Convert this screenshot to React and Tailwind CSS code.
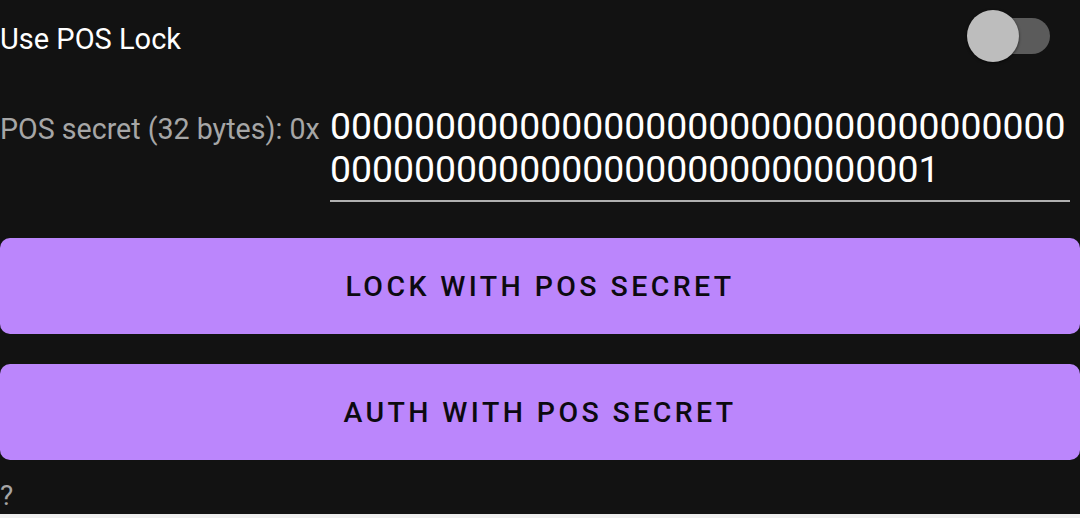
import React from "react";

export default function App() {
  const hex = "0".repeat(63) + "1";
  return (
    <div className="w-[1080px] h-[518px] bg-[#efefef] flex flex-col overflow-hidden" style={{ fontFamily: "Roboto, 'Liberation Sans', sans-serif" }}>
      <div className="h-[514px] shrink-0 bg-[#121212] flex flex-col overflow-hidden">
        <div className="h-[76px] shrink-0 flex items-center justify-between pr-[30px]">
          <span className="text-[29px] text-white leading-none mt-[3px]">Use POS Lock</span>
          <div className="relative w-[83px] h-[52px] mb-[4px]">
            <div className="absolute right-0 top-[8px] h-[36px] w-[76px] rounded-full bg-[#5b5b5b]" />
            <div className="absolute left-0 top-0 w-[52px] h-[52px] rounded-full bg-[#bdbdbd] shadow-[0_1px_3px_rgba(0,0,0,0.6)]" />
          </div>
        </div>
        <div className="mt-[29px] shrink-0 flex items-baseline">
          <div className="w-[330px] shrink-0 text-[28.6px] text-[#a6a6a6]">POS secret (32 bytes): 0x</div>
          <div className="w-[740px] text-[37.4px] leading-[43px] text-white break-all pb-[9px] border-b-2 border-[#b0b0b0]">
            {hex}
          </div>
        </div>
        <button className="mt-[36px] shrink-0 h-[96px] w-full rounded-[10px] bg-[#bb86fc] text-[#0c0a10] text-[28.5px] font-medium tracking-[3.4px] flex items-center justify-center pt-[2px]">
          LOCK WITH POS SECRET
        </button>
        <button className="mt-[30px] shrink-0 h-[96px] w-full rounded-[10px] bg-[#bb86fc] text-[#0c0a10] text-[28.5px] font-medium tracking-[3.4px] flex items-center justify-center pt-[2px]">
          AUTH WITH POS SECRET
        </button>
        <div className="mt-[19px] shrink-0 text-[28px] text-[#a6a6a6] leading-[34px]">?</div>
      </div>
    </div>
  );
}
